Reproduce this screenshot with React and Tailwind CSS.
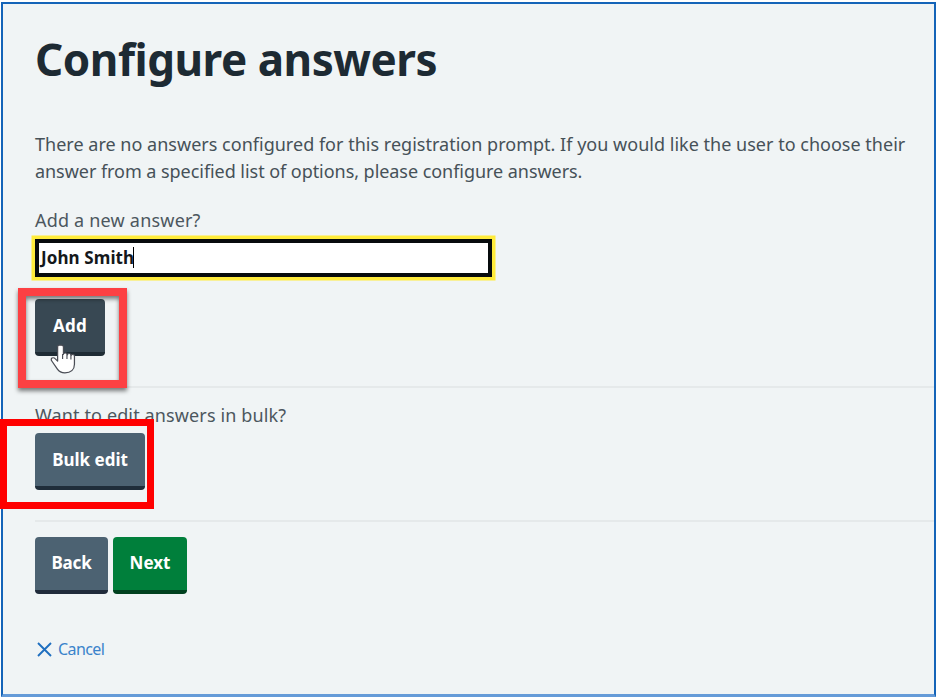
function Button({ children, className }) {
  return (
    <button
      type="button"
      className={`h-[57px] shrink-0 rounded-[4px] border-b-4 text-center text-[17px] font-bold whitespace-nowrap text-white ${className}`}
    >
      {children}
    </button>
  );
}

function HandCursor() {
  return (
    <svg className="absolute left-[14px] top-[45px] h-[30px] w-[27px]" viewBox="0 0 26 30" preserveAspectRatio="none">
      <path
        d="M9.900 1.200c-1.100 0-1.600.8-1.600 1.800v14.100l-2.200-2.200c-.9-1-2.200-1.400-3.200-.8-1 .7-.9 1.900-.2 2.900l5.400 8.100c1.600 2.500 3.700 3.700 7.200 3.700 5.700 0 9.200-3.200 9.200-8.600v-8c0-1.100-.6-1.900-1.600-1.900-.9 0-1.500.5-1.700 1.200-.1-1.300-.8-2-1.800-2-.9 0-1.600.5-1.800 1.300-.2-1.200-.9-1.900-1.900-1.900-.9 0-1.700.5-1.800 1.400V3c0-1-.8-1.800-2-1.800z"
        fill="#fff"
        stroke="#4a4d55"
        strokeWidth="1.2"
        strokeLinejoin="round"
      />
      <path d="M13.100 10v5M17.300 10.500V15M21.100 11.500V15.500" stroke="#4a4d55" strokeWidth="1.100" />
    </svg>
  );
}

export default function App() {
  return (
    <div className="h-[697px] w-[936px] overflow-hidden bg-white pt-[2px] pl-px font-['Noto_Sans',sans-serif]">
      <main className="relative flex h-[695px] w-[935px] flex-col items-start border-2 border-b-3 border-[#1464b8] border-b-[#659bd8] bg-[#f0f4f5] pt-[27px] pl-[32px] text-[#425563]">
        <h1 className="h-[56px] text-[44px] leading-[56px] font-bold tracking-[-0.48px] whitespace-nowrap text-[#1d2a33]">
          Configure answers
        </h1>
        <p className="mt-[44px] text-[18px] leading-[26.5px] whitespace-nowrap text-[#465158]">
          <span className="tracking-[0.015px]">There are no answers configured for this registration prompt. If you would like the user to choose their</span>
          <br />
          <span className="tracking-[-0.05px]">answer from a specified list of options, please configure answers.</span>
        </p>
        <label className="mt-[23px] h-[26px] text-[18px] leading-[26px] tracking-[0.2px] whitespace-nowrap text-[#4c575e]">
          <span>Add a new answer?</span>
        </label>
        <div className="mt-[6px] flex h-[38px] w-[457px] items-center border-4 border-[#070b0d] bg-white pb-px pl-[2px] text-[17px] font-bold whitespace-nowrap text-[#14181b] shadow-[0_0_0_3.500px_#ffeb3b]">
          <span className="tracking-[0.1px]">John Smith</span>
          <i className="-ml-px h-[21px] w-px bg-black" />
        </div>
        <div className="relative mt-[22px] flex">
          <Button className="w-[70px] border-[#1f2c35] bg-[#384853]">
            <span className="tracking-[0.3px]">Add</span>
          </Button>
          <div className="absolute -left-[17px] -top-[11px] h-[100px] w-[109px] border-8 border-[#fc4043] [filter:drop-shadow(0_3px_2px_rgba(0,0,0,0.5))]" />
          <HandCursor />
        </div>
        <hr className="mt-[30px] h-[2px] w-full border-0 bg-[#e5e9ea]" />
        <p className="mt-[14px] h-[26px] text-[18px] leading-[26px] tracking-[0.13px] whitespace-nowrap text-[#4c575e]">
          <span>Want to edit answers in bulk?</span>
        </p>
        <div className="relative mt-[5px] flex">
          <Button className="w-[110px] border-[#1f2d3a] bg-[#4c6272]">
            <span>Bulk edit</span>
          </Button>
          <div className="absolute -left-[35px] -top-[14px] h-[90px] w-[154px] border-7 border-[#ff0000]" />
        </div>
        <hr className="mt-[30px] h-[2px] w-full border-0 bg-[#e5e9ea]" />
        <div className="mt-[15px] flex gap-[5px]">
          <Button className="w-[73px] border-[#202b3b] bg-[#4c6272] pb-px">
            <span className="tracking-[-0.2px]">Back</span>
          </Button>
          <Button className="w-[74px] border-[#00401e] bg-[#007f3b] pb-px">
            <span>Next</span>
          </Button>
        </div>
        <a className="mt-[43px] flex h-[24px] items-center gap-[6px] pl-[2px] text-[16px] leading-[24px] tracking-[-0.6px] whitespace-nowrap text-[#3a83cb]">
          <svg className="h-[15px] w-[15px]" viewBox="0 0 15 15" fill="none" stroke="#1f6fc0" strokeWidth="1.900">
            <path d="M1 1l13 13M14 1L1 14" />
          </svg>
          <span>Cancel</span>
        </a>
      </main>
    </div>
  );
}
